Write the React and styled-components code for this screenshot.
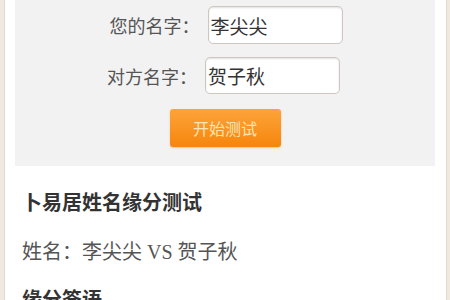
import styled, { createGlobalStyle } from 'styled-components'

const GlobalStyle = createGlobalStyle`
  html, body {
    margin: 0;
    padding: 0;
    background: #efe9df;
  }
  body {
    font-family: "Noto Sans CJK SC", "Noto Sans", sans-serif;
  }
`

const Page = styled.div`
  padding: 0 3px 0 4px;
  height: 300px;
  overflow: hidden;
`

const Card = styled.div`
  background: #ffffff;
  border-left: 1px solid #e3dacd;
  border-right: 1px solid #e3dacd;
  padding: 0 11px 0 10px;
  min-height: 300px;
`

const Panel = styled.div`
  background: #f2f2f2;
  padding: 6px 0 19px;
  display: flex;
  flex-direction: column;
  align-items: center;
`

const Row = styled.div`
  display: flex;
  align-items: center;
  gap: 8px;
  margin-bottom: 13px;
  margin-left: ${(p) => p.$shift || 0}px;
`

const Label = styled.label`
  font-size: 18px;
  color: #555;
  white-space: nowrap;
`

const Input = styled.input`
  box-sizing: border-box;
  width: 135px;
  height: ${(p) => p.$h || 38}px;
  border: 1px solid #cfc7bf;
  border-radius: 5px;
  background: #fff;
  box-shadow: inset 0 1px 2px rgba(0, 0, 0, 0.12);
  padding: 0 2px;
  font-family: "Noto Sans CJK SC", sans-serif;
  font-size: 19px;
  color: #333;
  outline: none;
`

const StartButton = styled.button`
  margin-top: 2px;
  width: 111px;
  height: 38px;
  border: none;
  border-radius: 3px;
  background: linear-gradient(#fda43a, #f6850c);
  box-shadow: 0 1px 2px rgba(200, 110, 20, 0.35);
  color: #fde4b4;
  font-family: "Noto Sans CJK SC", sans-serif;
  font-size: 16px;
  cursor: pointer;
`

const Result = styled.div`
  padding: 22px 7px 0;
  font-family: "Liberation Serif", "Noto Sans CJK SC", serif;
`

const Title = styled.h3`
  margin: 0 0 19px;
  font-size: 20px;
  line-height: 30px;
  font-weight: bold;
  color: #333;
`

const Line = styled.p`
  margin: 0 0 18px;
  font-size: 20px;
  line-height: 30px;
  color: #555;
`

export default function App() {
  return (
    <>
      <GlobalStyle />
      <Page>
        <Card>
          <Panel>
            <Row $shift={2}>
              <Label>您的名字：</Label>
              <Input defaultValue="李尖尖" />
            </Row>
            <Row $shift={-3}>
              <Label>对方名字：</Label>
              <Input defaultValue="贺子秋" $h={37} />
            </Row>
            <StartButton>开始测试</StartButton>
          </Panel>
          <Result>
            <Title>卜易居姓名缘分测试</Title>
            <Line>姓名：李尖尖 VS 贺子秋</Line>
            <Title>缘分签语</Title>
          </Result>
        </Card>
      </Page>
    </>
  )
}
